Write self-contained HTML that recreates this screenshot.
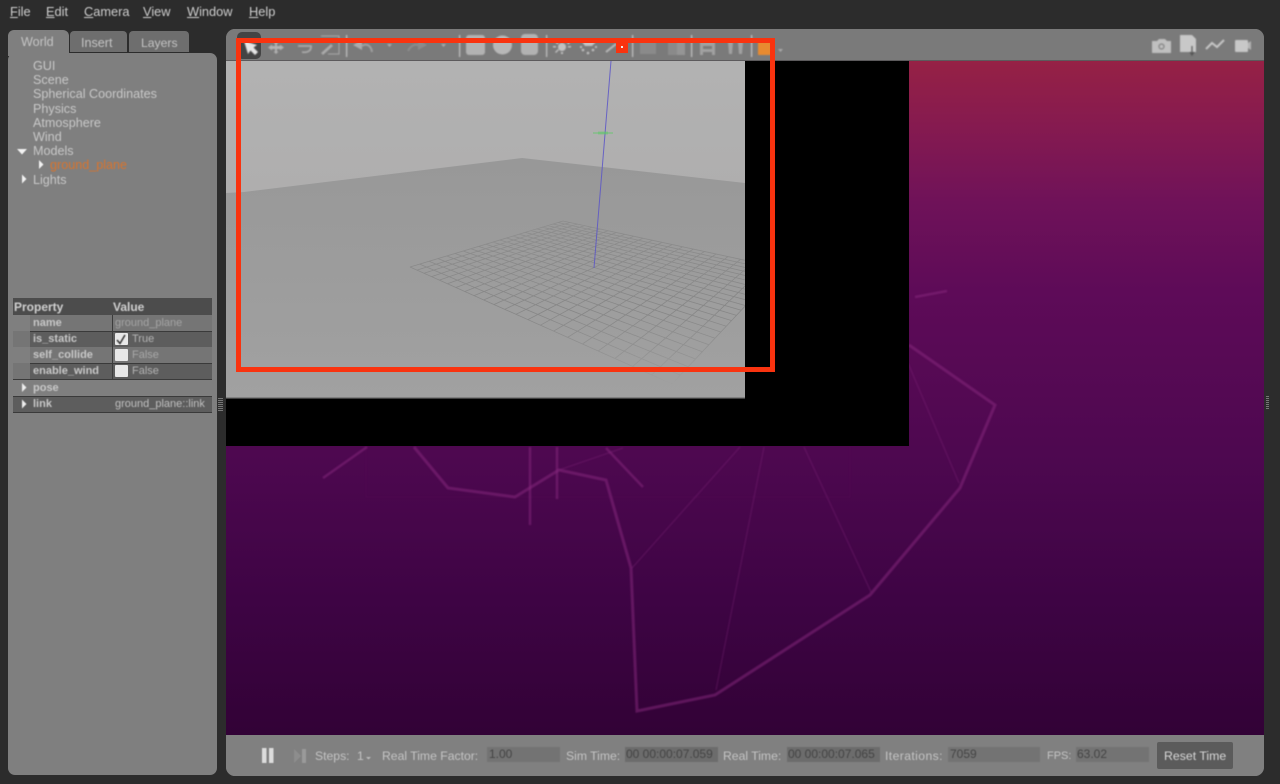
<!DOCTYPE html>
<html><head><meta charset="utf-8"><style>
html,body{margin:0;padding:0;width:1280px;height:784px;overflow:hidden;background:#2c2c2c}
body{position:relative;font-family:"Liberation Sans",sans-serif;font-size:13px;color:#cfcfcf}
div,span.t{position:absolute;white-space:nowrap}
.t{line-height:14px}
.m{top:5px;color:#cecece;font-size:12.8px}
.tr{left:33px;color:#c8c8c8;font-size:12.6px}
.row{left:13px;width:199px;height:16px}
.k{font-weight:bold;font-size:11px;color:#c8c8c8;left:33px;line-height:14px}
.v{font-size:11px;color:#b4b4b4;line-height:14px}
.cb{left:115px;width:13px;height:12px;background:#e8e8e8;border-radius:1px}
.s{top:749px;font-size:12.2px;color:#c4c4c4;line-height:14px}
.f{height:15px;color:#444;font-size:12px;line-height:15px}
svg{position:absolute;left:0;top:0}
#txt{position:absolute;left:0;top:0;width:1280px;height:784px;filter:blur(.5px)}
</style></head><body>

<div style="left:226px;top:29px;width:1038px;height:747px;background:#7e7e7e;border-radius:9px;overflow:hidden">
  <div style="left:0;top:0;width:1038px;height:31px;background:#7a7a7a;border-bottom:1px solid #5c5a5c"></div>
  <div style="left:0;top:32px;width:1038px;height:674px;background:linear-gradient(180deg,#962145 0,#851a50 10%,#6f1259 21%,#5e0b58 34%,#4e0850 58%,#3e0444 80%,#320236 100%)"></div>
  <div style="left:0;top:706px;width:1038px;height:41px;background:#808080"></div>
</div>

<svg width="1280" height="784" style="filter:blur(.8px)">
  <g fill="none" stroke="#8a2a80" stroke-opacity=".5" stroke-width="3" stroke-linejoin="miter">
    <path d="M947 291L915 297" stroke-width="2.5"/>
    <path d="M909 345L995 405L960 488L870 595L715 695L637 711L631 568L606 480L559 470L515 497L448 488L414 447"/>
    <path d="M323 478L367 447" stroke-width="2.5"/>
    <path d="M530 447V525" stroke-width="2.5"/>
    <path d="M557 447V499" stroke-width="2.5"/>
    <path d="M606 448L643 487" stroke-width="2.5"/>
  </g>
  <g fill="none" stroke="#8a2a80" stroke-opacity=".38" stroke-width="1">
    <path d="M632 568L740 447"/><path d="M716 690L764 447"/><path d="M871 592L804 447"/><path d="M959 483L908 363"/><path d="M559 470L623 448"/>
    <path d="M366 447V497H850V447" stroke-opacity=".08"/>
  </g>
</svg>

<div style="left:226px;top:61px;width:683px;height:385px;background:#000"></div>

<svg width="1280" height="784" id="scene">
  <defs>
    <linearGradient id="sky" x1="0" y1="0" x2="0" y2="1"><stop offset="0" stop-color="#b2b2b2"/><stop offset="1" stop-color="#aaa8a8"/></linearGradient>
    <linearGradient id="gnd" x1="0" y1="0" x2="0" y2="1"><stop offset="0" stop-color="#989898"/><stop offset="1" stop-color="#a1a1a1"/></linearGradient>
    <linearGradient id="gl" gradientUnits="userSpaceOnUse" x1="0" y1="220" x2="0" y2="385">
      <stop offset="0" stop-color="#777" stop-opacity=".4"/><stop offset=".55" stop-color="#6e6e6e" stop-opacity=".5"/><stop offset=".8" stop-color="#777" stop-opacity=".35"/><stop offset="1" stop-color="#888" stop-opacity=".05"/>
    </linearGradient>
    <clipPath id="c"><rect x="226" y="61" width="519" height="337"/></clipPath>
    <filter id="b1"><feGaussianBlur stdDeviation=".35"/></filter>
  </defs>
  <rect x="226" y="61" width="519" height="337" fill="url(#sky)"/>
  <path d="M226 193L244 192L522 158L745 183V398H226Z" fill="url(#gnd)"/>
  <rect x="226" y="397" width="519" height="1.5" fill="#808080"/>
  <g clip-path="url(#c)" filter="url(#b1)"><g id="grid" fill="none" stroke="url(#gl)" stroke-width=".8"></g></g>
  <path d="M611 61L594 268" stroke="#5a55c8" stroke-width="1" fill="none" stroke-opacity=".85"/>
  <path d="M593 133H613" stroke="#5cc866" stroke-width="1" stroke-opacity=".8"/>
  <path d="M598 133H608" stroke="#5cc866" stroke-width="3" stroke-opacity=".45"/>
</svg>

<!-- left panel -->
<div style="left:8px;top:53px;width:209px;height:722px;background:#7f7f7f;border-radius:7px"></div>
<div style="left:8px;top:30px;width:61px;height:26px;background:#7f7f7f;border-radius:6px 6px 0 0"></div>
<div style="left:70px;top:31px;width:57px;height:21px;background:#6e6e6e;border-radius:4px 4px 0 0"></div>
<div style="left:129px;top:31px;width:60px;height:21px;background:#6e6e6e;border-radius:4px 4px 0 0"></div>

<!-- property table -->
<div class="row" style="top:298px;height:17px;background:#4c4c4c"></div>
<div class="row" style="top:315px;background:#757575"></div>
<div class="row" style="top:331px;background:#5d5d5d;border-bottom:1px solid #3a3a3a;border-top:1px solid #3a3a3a;height:15px"></div>
<div class="row" style="top:347px;background:#757575"></div>
<div class="row" style="top:363px;background:#5d5d5d;border-bottom:1px solid #3a3a3a;border-top:1px solid #3a3a3a;height:15px"></div>
<div class="row" style="top:396px;background:#5d5d5d;border-bottom:1px solid #3a3a3a;border-top:1px solid #3a3a3a;height:15px"></div>
<div style="left:13px;top:315px;width:17px;height:16px;background:#7f7f7f"></div>
<div style="left:13px;top:331px;width:17px;height:16px;background:#757575"></div>
<div style="left:13px;top:347px;width:17px;height:16px;background:#7f7f7f"></div>
<div style="left:13px;top:363px;width:17px;height:16px;background:#757575"></div>
<div style="left:112px;top:315px;width:1px;height:64px;background:#3c3c3c"></div>
<div class="cb" style="top:333px"></div>
<div class="cb" style="top:349px"></div>
<div class="cb" style="top:365px"></div>

<!-- toolbar button -->
<div style="left:237px;top:32px;width:24px;height:27px;background:#444;border-radius:5px"></div>

<svg width="1280" height="784" style="filter:blur(.8px)">
  <path d="M244 41L257 45L253.500 47.500L258 52L255 55L250.500 50.500L248 54Z" fill="#e6e6e6"/>
  <g opacity=".85">
  <path d="M276 41l2.500 2.500h-1.500v2.500h3v-1.500l4 3-4 3v-1.500h-3v2.500h1.500l-2.500 2.500-2.500-2.500h1.500v-2.500h-3v1.500l-4-3 4-3v1.500h3v-2.500h-1.500z" fill="#bdbdbd"/>
  <g fill="none" stroke="#b4b4b4" stroke-width="1.800">
    <path d="M298 46H311V47C311 51 307 53 302 52"/>
    <path d="M321 36H339V54H328" stroke-width="1"/>
    <path d="M322 54L332 45" stroke-width="2.800"/>
    <path d="M362 46C366 43 371 45 372 52" stroke-width="2" stroke="#a8a8a8"/>
    <path d="M420 46C416 43 411 45 408 51" stroke="#909090" stroke-width="2"/>
  </g>
  <path d="M353 45L362 40V50Z" fill="#b4b4b4"/>
  <path d="M427 45L418 40V50Z" fill="#8f8f8f"/>
  <path d="M387 44h5l-2.500 3zM441 44h5l-2.500 3zM778 49h5l-2.500 3z" fill="#b4b4b4"/>
  <g fill="#d4d4d4">
    <rect x="346" y="35" width="1.200" height="22"/><rect x="459" y="35" width="1.200" height="22"/>
    <rect x="546" y="35" width="1.200" height="22"/><rect x="632" y="35" width="1.200" height="22"/>
    <rect x="691" y="35" width="1.200" height="22"/><rect x="751" y="35" width="1.200" height="22"/>
  </g>
  <rect x="466" y="35" width="19" height="20" rx="3" fill="#bcbcbc"/>
  <circle cx="502.500" cy="45" r="9.500" fill="#c2c2c2"/>
  <rect x="521" y="34" width="17" height="21" rx="4" fill="#bcbcbc"/>
  <g fill="#cfcfcf">
    <circle cx="562" cy="47" r="4"/>
    <path d="M553 46h3v1.500h-3zM568 46h3v1.500h-3zM561 40h2v2h-2zM561 52h2v2h-2z"/>
    <path d="M555 42l1.500-1 2 2-1 1.500zM569 41l1.500 1-2 2.500-1.500-1.500zM555 52l3-3 1 1-3 3z"/>
    <path d="M582 42C585 40 592 40 596 42L592 46H585Z"/>
    <circle cx="583" cy="50" r="1.300"/><circle cx="588" cy="53" r="1.300"/><circle cx="593" cy="50" r="1.300"/><circle cx="596" cy="47" r="1.100"/><circle cx="581" cy="47" r="1.100"/>
  </g>
  <path d="M606 52L616 44" stroke="#c4c4c4" stroke-width="2"/>
  <rect x="640" y="42" width="16" height="12" fill="#8d8d8d"/>
  <rect x="668" y="41" width="17" height="14" fill="#8e8e8e"/>
  <rect x="677" y="41" width="8" height="14" fill="#9a9a9a"/>
  <path d="M700 42H715V46H700ZM700 49H715V52H700ZM700 42H703V55H700ZM712 42H715V55H712Z" fill="#a8a8a8"/>
  <path d="M728 42C729 40 733 40 733 42L732 54H729ZM738 42C739 40 743 40 743 42L742 54H739Z" fill="#a8a8a8"/>
  </g>
  <rect x="758" y="42" width="13" height="13" fill="#e88a30"/>
  <!-- right icons -->
  <path d="M1152 41H1157L1159 39H1165L1167 41H1171V53H1152Z" fill="#c0c0c0"/>
  <circle cx="1161.500" cy="46.500" r="2.500" fill="none" stroke="#808080" stroke-width="1.200"/>
  <path d="M1180 35H1192L1196 39V52H1180Z" fill="#c8c8c8"/>
  <path d="M1192 46V54M1190 52l2 3 2-3" stroke="#555" stroke-width="1.200" fill="none"/>
  <path d="M1206 49L1212 43L1217 47L1224 40" stroke="#c8c8c8" stroke-width="2" fill="none"/>
  <rect x="1235" y="40" width="13" height="12" rx="1" fill="#c8c8c8"/>
  <path d="M1248 43l3-2v9l-3-2z" fill="#b4b4b4"/>
</svg>
<svg width="1280" height="784" style="filter:blur(.4px)">
  <!-- tree arrows -->
  <path d="M17 149H27L22 154.500Z" fill="#f2f2f2"/>
  <path d="M39 160V169L43.500 164.500Z" fill="#f2f2f2"/>
  <path d="M22 174.500V183.500L26.500 179Z" fill="#f2f2f2"/>
  <path d="M22 383V392L26.500 387.500Z" fill="#eee"/>
  <path d="M22 399.500V408.500L26.500 404Z" fill="#eee"/>
  <path d="M117 340L120 343.500L125 335" stroke="#333" stroke-width="1.500" fill="none"/>
  <!-- bottom controls -->
  <rect x="262" y="748" width="4.500" height="15" fill="#dcdcdc"/><rect x="269" y="748" width="4.500" height="15" fill="#dcdcdc"/>
  <path d="M294 749L301 756L294 763Z" fill="#8d8d8d"/><rect x="302" y="749" width="4" height="14" fill="#9a9a9a"/>
  <path d="M366 757h5l-2.500 2.500z" fill="#bbb"/>
</svg>

<!-- Reset button -->
<div style="left:1157px;top:742px;width:76px;height:27px;background:#5b5b5b;border-radius:2px"></div>

<div style="left:218px;top:398px;width:5px;height:14px;background:repeating-linear-gradient(180deg,#777 0 1px,transparent 1px 2px)"></div>
<div style="left:1266px;top:396px;width:3px;height:14px;background:repeating-linear-gradient(180deg,#777 0 1px,transparent 1px 2px)"></div>

<div id="txt">
  <div class="f" style="left:487px;top:747px;width:73px;background:#737373;padding-left:2px;box-sizing:border-box">1.00</div>
  <div class="f" style="left:625px;top:747px;width:93px;background:#6c6c6c;padding-left:1px;box-sizing:border-box">00 00:00:07.059</div>
  <div class="f" style="left:787px;top:747px;width:93px;background:#6c6c6c;padding-left:1px;box-sizing:border-box">00 00:00:07.065</div>
  <div class="f" style="left:948px;top:747px;width:92px;background:#737373;padding-left:2px;box-sizing:border-box">7059</div>
  <div class="f" style="left:1076px;top:747px;width:73px;background:#737373;padding-left:1px;box-sizing:border-box">63.02</div>

  <span class="t m" style="left:10px"><u>F</u>ile</span>
  <span class="t m" style="left:46px"><u>E</u>dit</span>
  <span class="t m" style="left:84px"><u>C</u>amera</span>
  <span class="t m" style="left:143px"><u>V</u>iew</span>
  <span class="t m" style="left:187px"><u>W</u>indow</span>
  <span class="t m" style="left:249px"><u>H</u>elp</span>
  <span class="t" style="left:21px;top:35px;color:#c4c4c4;font-size:12.6px">World</span>
  <span class="t" style="left:81px;top:36px;color:#c4c4c4;font-size:12.6px">Insert</span>
  <span class="t" style="left:141px;top:36px;color:#c4c4c4;font-size:12.2px">Layers</span>
  <span class="t tr" style="top:59px">GUI</span>
  <span class="t tr" style="top:73px">Scene</span>
  <span class="t tr" style="top:87px">Spherical Coordinates</span>
  <span class="t tr" style="top:102px">Physics</span>
  <span class="t tr" style="top:116px">Atmosphere</span>
  <span class="t tr" style="top:130px">Wind</span>
  <span class="t tr" style="top:144px">Models</span>
  <span class="t" style="left:50px;top:158px;color:#d8742e;font-size:12.6px">ground_plane</span>
  <span class="t tr" style="top:173px">Lights</span>
  <span class="t" style="left:14px;top:300px;font-weight:bold;font-size:12px;color:#d0d0d0">Property</span>
  <span class="t" style="left:113px;top:300px;font-weight:bold;font-size:12px;color:#d0d0d0">Value</span>
  <span class="t k" style="top:316px">name</span>
  <span class="t v" style="left:115px;top:316px;color:#a4a4a4">ground_plane</span>
  <span class="t k" style="top:332px">is_static</span>
  <span class="t v" style="left:132px;top:332px">True</span>
  <span class="t k" style="top:348px">self_collide</span>
  <span class="t v" style="left:132px;top:348px;color:#a8a8a8">False</span>
  <span class="t k" style="top:364px">enable_wind</span>
  <span class="t v" style="left:132px;top:364px">False</span>
  <span class="t k" style="top:381px">pose</span>
  <span class="t k" style="top:397px">link</span>
  <span class="t v" style="left:115px;top:397px;color:#c0c0c0">ground_plane::link</span>
  <span class="t s" style="left:315px">Steps:</span>
  <span class="t s" style="left:357px">1</span>
  <span class="t s" style="left:382px">Real Time Factor:</span>
  <span class="t s" style="left:566px">Sim Time:</span>
  <span class="t s" style="left:723px">Real Time:</span>
  <span class="t s" style="left:885px;letter-spacing:.4px">Iterations:</span>
  <span class="t s" style="left:1047px;font-size:11px">FPS:</span>
  <span class="t" style="left:1164px;top:749px;color:#d8d8d8;font-size:12.3px">Reset Time</span>
</div>

<!-- red annotation -->
<div style="left:236px;top:38px;width:539px;height:334px;box-sizing:border-box;border:5px solid #f9330f"></div>
<div style="left:616px;top:43px;width:12px;height:10px;background:#f9330f"></div>
<div style="left:621px;top:46px;width:2px;height:2px;background:#eee"></div>

<script>
(function(){
var A=[410,267],B=[563,221],C=[781,268],D=[672,384],N=22,s='';
var dx1=B[0]-C[0],dx2=D[0]-C[0],sx=A[0]-B[0]+C[0]-D[0],dy1=B[1]-C[1],dy2=D[1]-C[1],sy=A[1]-B[1]+C[1]-D[1];
var den=dx1*dy2-dx2*dy1,g=(sx*dy2-dx2*sy)/den,k=(dx1*sy-sx*dy1)/den;
var a=B[0]-A[0]+g*B[0],b=D[0]-A[0]+k*D[0],c=A[0],d=B[1]-A[1]+g*B[1],e=D[1]-A[1]+k*D[1],f=A[1];
function P(u,v){var w=g*u+k*v+1;return ((a*u+b*v+c)/w).toFixed(1)+' '+((d*u+e*v+f)/w).toFixed(1)}
for(var i=0;i<=N;i++){var t=i/N;s+='M'+P(t,0)+'L'+P(t,1)+'M'+P(0,t)+'L'+P(1,t)}
var p=document.createElementNS('http://www.w3.org/2000/svg','path');p.setAttribute('d',s);document.getElementById('grid').appendChild(p);
})();
</script>
</body></html>
